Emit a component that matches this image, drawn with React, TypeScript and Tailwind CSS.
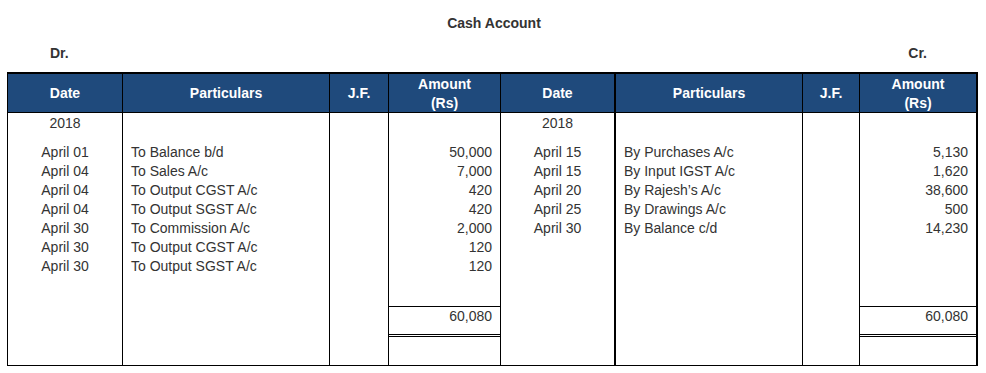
import React from 'react';

type Entry = { date: string; particulars: string; amount: string };

const debit: Entry[] = [
  { date: 'April 01', particulars: 'To Balance b/d', amount: '50,000' },
  { date: 'April 04', particulars: 'To Sales A/c', amount: '7,000' },
  { date: 'April 04', particulars: 'To Output CGST A/c', amount: '420' },
  { date: 'April 04', particulars: 'To Output SGST A/c', amount: '420' },
  { date: 'April 30', particulars: 'To Commission A/c', amount: '2,000' },
  { date: 'April 30', particulars: 'To Output CGST A/c', amount: '120' },
  { date: 'April 30', particulars: 'To Output SGST A/c', amount: '120' },
];

const credit: Entry[] = [
  { date: 'April 15', particulars: 'By Purchases A/c', amount: '5,130' },
  { date: 'April 15', particulars: 'By Input IGST A/c', amount: '1,620' },
  { date: 'April 20', particulars: 'By Rajesh’s A/c', amount: '38,600' },
  { date: 'April 25', particulars: 'By Drawings A/c', amount: '500' },
  { date: 'April 30', particulars: 'By Balance c/d', amount: '14,230' },
];

const HeadCell: React.FC<{ w: string; last?: boolean; thick?: boolean; children: React.ReactNode }> = ({ w, last, thick, children }) => (
  <div
    className={`${w} flex items-center justify-center text-center font-bold text-white leading-[19px] pt-[1px] ${
      last ? '' : thick ? 'border-r-2 border-black' : 'border-r border-black'
    }`}
  >
    {children}
  </div>
);

const Side: React.FC<{ rows: Entry[]; total: string; widths: string[]; thickDate?: boolean }> = ({ rows, total, widths, thickDate }) => (
  <>
    <div className={`${widths[0]} ${thickDate ? 'border-r-2' : 'border-r'} border-black flex flex-col items-center pt-[1px]`}>
      <div className="h-[19px]">2018</div>
      <div className="h-[10px]" />
      {rows.map((r, i) => (
        <div key={i} className="h-[19px]">{r.date}</div>
      ))}
    </div>
    <div className={`${widths[1]} border-r border-black flex flex-col pl-2 pt-[1px]`}>
      <div className="h-[29px]" />
      {rows.map((r, i) => (
        <div key={i} className="h-[19px] whitespace-nowrap">{r.particulars}</div>
      ))}
    </div>
    <div className={`${widths[2]} border-r border-black`} />
    <div className={`${widths[3]} flex flex-col`}>
      <div className="flex-1 flex flex-col items-end pr-2 pt-[1px]">
        <div className="h-[29px]" />
        {rows.map((r, i) => (
          <div key={i} className="h-[19px]">{r.amount}</div>
        ))}
      </div>
      <div className="h-[29px] border-t border-b border-black text-right pr-2">{total}</div>
      <div className="h-[1px]" />
      <div className="h-[29px] border-t border-black" />
    </div>
  </>
);

const App: React.FC = () => {
  return (
    <div className="w-[986px] h-[373px] bg-white text-[14px] text-[#333] font-['Liberation_Sans',Arial,sans-serif] pt-[13px]">
      <div className="h-[20px] leading-[20px] text-center font-bold pl-[2px]">Cash Account</div>
      <div className="mt-[10px] h-[20px] leading-[20px] flex justify-between font-bold pl-[50px] pr-[59px]">
        <span>Dr.</span>
        <span>Cr.</span>
      </div>
      <div className="mt-[9px] ml-[7px] w-[971px] border-t-2 border-l border-r-2 border-b border-black leading-[19px]">
        <div className="flex h-[39px] bg-[#1f4a7c] border-b border-black">
          <HeadCell w="w-[115px]">Date</HeadCell>
          <HeadCell w="w-[207px]">Particulars</HeadCell>
          <HeadCell w="w-[59px]">J.F.</HeadCell>
          <HeadCell w="w-[112px]">
            Amount
            <br />
            (Rs)
          </HeadCell>
          <HeadCell w="w-[115px]" thick>Date</HeadCell>
          <HeadCell w="w-[187px]">Particulars</HeadCell>
          <HeadCell w="w-[57px]">J.F.</HeadCell>
          <HeadCell w="w-[116px]" last>
            Amount
            <br />
            (Rs)
          </HeadCell>
        </div>
        <div className="flex h-[252px]">
          <Side rows={debit} total="60,080" widths={['w-[115px]', 'w-[207px]', 'w-[59px]', 'w-[112px] border-r border-black']} />
          <Side rows={credit} total="60,080" widths={['w-[115px]', 'w-[187px]', 'w-[57px]', 'w-[116px]']} thickDate />
        </div>
      </div>
    </div>
  );
};

export default App;
